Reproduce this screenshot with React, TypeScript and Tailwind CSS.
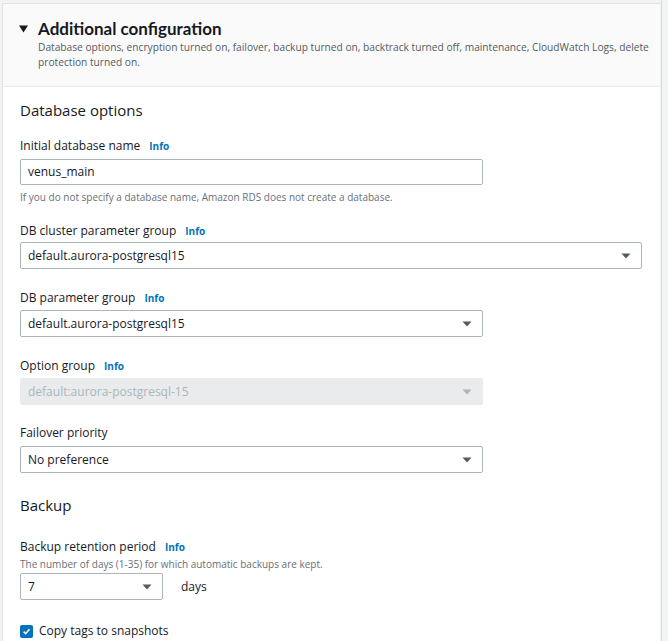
import React from "react";

const font = { fontFamily: '"Open Sans", "Noto Sans", Arial, sans-serif' };

function Arrow({ disabled }: { disabled?: boolean }) {
  return (
    <svg width="10" height="6" viewBox="0 0 10 6" className="shrink-0">
      <path d="M0.5 0.5 L9.5 0.5 L5 5.5 Z" fill={disabled ? "#aab7b8" : "#545b64"} />
    </svg>
  );
}

function Label({ text, info, className = "" }: { text: string; info?: boolean; className?: string }) {
  return (
    <div className={`flex items-center h-[18px] text-[12px] text-[#16191f] ${className}`}>
      <span>{text}</span>
      {info && <span className="ml-[9px] text-[10px] font-bold text-[#0073bb]">Info</span>}
    </div>
  );
}

function Select({ value, width, disabled, className = "" }: { value: string; width: string; disabled?: boolean; className?: string }) {
  return (
    <div
      className={`${width} h-[27px] flex items-center justify-between pl-[7px] pr-[10px] rounded-[2px] text-[12px] ${
        disabled
          ? "bg-[#e9ebed] text-[#aab7b8] border border-[#e9ebed]"
          : "bg-white text-[#16191f] border border-[#aab7b8]"
      } ${className}`}
    >
      <span>{value}</span>
      <Arrow disabled={disabled} />
    </div>
  );
}

export default function App() {
  return (
    <div className="w-[668px] h-[641px] bg-[#f2f3f3] flex overflow-hidden" style={font}>
      <div className="ml-[2px] mt-[3px] w-[658px] h-[700px] bg-white border-l border-t border-[#e1e4e4] flex flex-col">
        <div className="bg-[#fafafa] border-b border-[#eaeded] pt-[14px] pb-[16px] pl-[16px] pr-[8px]">
          <div className="flex items-center h-[22px]">
            <svg width="9" height="8" viewBox="0 0 9 8" className="mr-[10px]">
              <path d="M0 0.5 L9 0.5 L4.5 7.5 Z" fill="#16191f" />
            </svg>
            <span className="text-[17px] font-bold text-[#16191f]" style={{ fontFamily: 'Lato, "Open Sans", sans-serif' }}>
              Additional configuration
            </span>
          </div>
          <div className="pl-[19px] text-[10.2px] leading-[15px] text-[#545b64]">
            Database options, encryption turned on, failover, backup turned on, backtrack turned off, maintenance, CloudWatch Logs, delete protection turned on.
          </div>
        </div>
        <div className="pl-[17px] flex flex-col">
          <div className="mt-[12px] h-[22px] flex items-center text-[15px] text-[#16191f]">Database options</div>

          <Label text="Initial database name" info className="mt-[16px]" />
          <div className="mt-[4px] w-[463px] h-[26px] border border-[#aab7b8] rounded-[2px] flex items-center pl-[7px] text-[12px] text-[#16191f]">
            venus_main
          </div>
          <div className="mt-[5px] h-[14px] flex items-center text-[10px] text-[#687078]">
            If you do not specify a database name, Amazon RDS does not create a database.
          </div>

          <Label text="DB cluster parameter group" info className="mt-[18px]" />
          <Select value="default.aurora-postgresql15" width="w-[622px]" className="mt-[2px]" />

          <Label text="DB parameter group" info className="mt-[20px]" />
          <Select value="default.aurora-postgresql15" width="w-[463px]" className="mt-[3px]" />

          <Label text="Option group" info className="mt-[20px]" />
          <Select value="default:aurora-postgresql-15" width="w-[463px]" disabled className="mt-[3px]" />

          <Label text="Failover priority" className="mt-[19px]" />
          <Select value="No preference" width="w-[463px]" className="mt-[4px]" />

          <div className="mt-[21px] h-[22px] flex items-center text-[15px] text-[#16191f]">Backup</div>

          <Label text="Backup retention period" info className="mt-[22px]" />
          <div className="mt-[1px] h-[14px] flex items-center text-[10px] text-[#687078]">
            The number of days (1-35) for which automatic backups are kept.
          </div>
          <div className="mt-[2px] flex items-center">
            <Select value="7" width="w-[143px]" />
            <span className="ml-[18px] text-[12px] text-[#16191f]">days</span>
          </div>

          <div className="mt-[22px] h-[18px] flex items-center">
            <div className="w-[13px] h-[13px] rounded-[2px] bg-[#0073bb] flex items-center justify-center">
              <svg width="9" height="9" viewBox="0 0 10 10">
                <path d="M1.8 5.2 L4.1 7.4 L8.3 2.6" stroke="white" strokeWidth="1.8" fill="none" />
              </svg>
            </div>
            <span className="ml-[6px] text-[12px] text-[#16191f]">Copy tags to snapshots</span>
          </div>
        </div>
      </div>
      <div className="ml-[1px] w-[1px] bg-[#dcdcdc]" />
    </div>
  );
}
